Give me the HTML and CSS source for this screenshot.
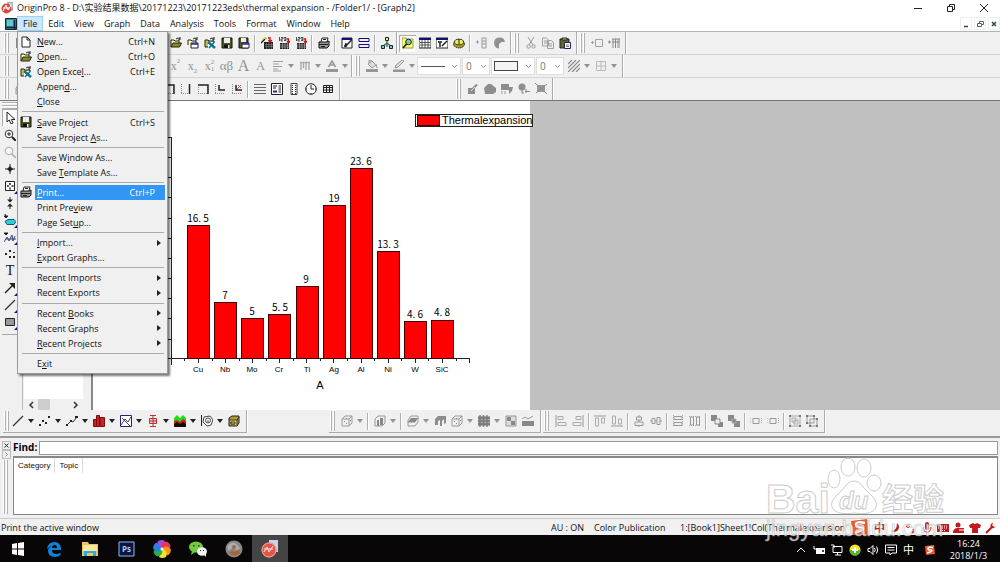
FILE: index.html
```html
<!DOCTYPE html>
<html lang="en">
<head>
<meta charset="utf-8">
<title>OriginPro 8</title>
<link rel="stylesheet" href="styles.css">
</head>
<body>
<svg class="sprite" aria-hidden="true">
  <symbol id="new" viewBox="0 0 12 12"><path d="M2 1h5l3 3v7H2zM7 1v3h3" fill="#fff" stroke="#222"/></symbol>
  <symbol id="open" viewBox="0 0 12 12"><path d="M1 10V3h3l1 1h4v2" fill="#ffffa0" stroke="#222"/><path d="M1 10l2-4h8.500l-2 4z" fill="#8c8a18" stroke="#222"/><path d="M6 2q2-2 4 0M10 0v3H8" fill="none" stroke="#222"/></symbol>
  <symbol id="opent" viewBox="0 0 12 12"><path d="M1 8V3h3l1 1h4v2" fill="#ffffa0" stroke="#222"/><path d="M6 2q2-2 4 0M10 0v3H8" fill="none" stroke="#222"/><path d="M4 6h7v5H4z" fill="#fff" stroke="#222"/><path d="M4 7h7" stroke="#22b" stroke-width="1.500"/></symbol>
  <symbol id="excel" viewBox="0 0 12 12"><path d="M1 10V3h3l1 1h5v6z" fill="#c5c44a" stroke="#222"/><path d="M6 2q2-2 4 0M10 0v3H8" fill="none" stroke="#222"/><path d="M4 5h7v6H4z" fill="#fff"/><path d="M4 5l7 6" stroke="#087a7a" stroke-width="2.500"/><path d="M10.500 5L5 11" stroke="#16a" stroke-width="1.500"/></symbol>
  <symbol id="save" viewBox="0 0 12 12"><path d="M1 1h10v10H1z" fill="#55581b" stroke="#111"/><path d="M3 1h6v5H3z" fill="#eee"/><path d="M3 7.500h6V11H3z" fill="#111"/><path d="M7 8h1.500v3H7z" fill="#eee"/></symbol>
  <symbol id="savet" viewBox="0 0 12 12"><path d="M1 1h9v10H1z" fill="#55581b" stroke="#111"/><path d="M3 1h5v4H3z" fill="#eee"/><path d="M4 6h7v5H4z" fill="#fff" stroke="#222"/><path d="M4 7h7" stroke="#22b" stroke-width="1.500"/></symbol>
  <symbol id="wiz" viewBox="0 0 12 12"><path d="M3 5h9v7H3z" fill="#222"/><path d="M4 7.500h8M4 9.500h8M5.500 6v6M8 6v6M10.500 6v6" stroke="#999" stroke-width=".5"/><path d="M0 6l5-5" stroke="#222" stroke-width="1.500"/><path d="M3 0l2 3M1 2l4-1" stroke="#dd2"/><path d="M7 1h2v3M7.500 3L9 5l2-2" stroke="#c11" fill="none" stroke-width="1.300"/></symbol>
  <symbol id="imp" viewBox="0 0 12 12"><path d="M2 6h9v6H2z" fill="#222"/><path d="M2 8h9M2 10h9M4.500 6v6M7 6v6M9.500 6v6" stroke="#bbb" stroke-width=".6"/><path d="M1.500 0v4M3 .5h2v1.500H3V4h2M6 .5h2v3H6M6 2h2" fill="none" stroke="#222" stroke-width=".8"/><path d="M9 2h1.500v3M9 4l1.500 2L12 4" stroke="#c11" fill="none" stroke-width="1.300"/></symbol>
  <symbol id="print" viewBox="0 0 12 12"><path d="M3 5l1-4h6L9 5" fill="#fff" stroke="#222"/><path d="M1 5h8l2-1v5l-2 2H1z" fill="#999" stroke="#111"/><path d="M1 7.500h9M5 2.500h3M3 9.500h4" stroke="#222"/></symbol>
  <symbol id="note" viewBox="0 0 12 12"><path d="M1 1h10v10H1z" fill="#fff" stroke="#222"/><path d="M1 2h10" stroke="#117" stroke-width="2"/><path d="M10.500 3L4 10l1-4M3 9h3" stroke="#222" fill="none" stroke-width="1.500"/></symbol>
  <symbol id="rows" viewBox="0 0 12 12"><path d="M1 1.500h10v3H1zM1 7.500h10v3H1z" fill="#eef" stroke="#117"/></symbol>
  <symbol id="tree" viewBox="0 0 12 12"><path d="M6 3v3M6 6L2 9M6 6l4 3M6 6v4" stroke="#222"/><path d="M4.500.5h3v3h-3z" fill="#ee7" stroke="#222"/><path d="M.5 8.500h3v3h-3zM8.500 8.500h3v3h-3z" fill="#7cc" stroke="#222"/><path d="M4.500 6.500h3v2h-3z" fill="#2a8" /></symbol>
  <symbol id="find" viewBox="0 0 12 12"><path d="M0 1h4l1 1h6v9H0z" fill="#ffff70" stroke="#995"/><circle cx="6.500" cy="5" r="2.800" fill="#6bd1a8" stroke="#222"/><path d="M4.500 7L1 11" stroke="#222" stroke-width="1.800"/></symbol>
  <symbol id="sheet" viewBox="0 0 12 12"><path d="M0 1h12v10H0z" fill="#fff" stroke="#222"/><path d="M0 2h12" stroke="#117" stroke-width="2"/><path d="M3 3v8M6 3v8M9 3v8M1 5.500h10M1 8h10" stroke="#333" stroke-width=".8"/></symbol>
  <symbol id="script" viewBox="0 0 12 12"><path d="M0 1h12v10H0z" fill="#fff" stroke="#222"/><path d="M0 2h12" stroke="#117" stroke-width="2"/><path d="M2 5h4M4 5v5M6 9l5-5" stroke="#222" stroke-width="1.500"/></symbol>
  <symbol id="gear" viewBox="0 0 12 12"><ellipse cx="6" cy="7" rx="5.500" ry="4" fill="#a59a22" stroke="#222" stroke-dasharray="1.500 .8"/><ellipse cx="6" cy="5" rx="4.500" ry="2.800" fill="#ee6" stroke="#443"/><path d="M6 2v5" stroke="#222"/></symbol>
  <symbol id="addcol" viewBox="0 0 12 12"><path d="M0 5h3M1.500 3.500v3M6 1h4v10H6zM6 4h4M6 7h4" fill="none" stroke="#999"/></symbol>
  <symbol id="arc" viewBox="0 0 12 12"><path d="M12 5A5.500 5.500 0 1 0 6 11.500V7l2.500-2z" fill="#919191"/></symbol>
  <symbol id="cut" viewBox="0 0 12 12"><path d="M3 0l5 8M9 0L4 8" stroke="#999"/><circle cx="3.500" cy="9.500" r="1.700" fill="none" stroke="#999"/><circle cx="8.500" cy="9.500" r="1.700" fill="none" stroke="#999"/></symbol>
  <symbol id="copy" viewBox="0 0 12 12"><path d="M.5 1h4l2 2v6h-6zM5.500 3.500h4l2 2v6h-6zM2 4h3M2 6h3M7 7h3M7 9h3" fill="#eee" stroke="#a0a0a0"/></symbol>
  <symbol id="paste" viewBox="0 0 12 12"><path d="M1 2h9v9H1z" fill="#65642b" stroke="#222"/><path d="M3 1h5v2H3z" fill="#cc8" stroke="#222"/><path d="M5.500 5.500h6v6h-6z" fill="#fff" stroke="#225"/><path d="M7 8h3M7 9.500h3" stroke="#225" stroke-width=".6"/></symbol>
  <symbol id="addbox" viewBox="0 0 12 12"><path d="M0 5.500h3M1.500 4v3M4.500 2.500h7v7h-7z" fill="none" stroke="#a0a0a0"/></symbol>
  <symbol id="addgrid" viewBox="0 0 12 12"><path d="M0 5h3M1.500 3.500v3M4 2h8M4 5h8M5 2v9M7.500 2v9M10 2v9M12 2v9" fill="none" stroke="#8a8a8a"/></symbol>
  <symbol id="left" viewBox="0 0 12 12"><path d="M1 1.500h10M1 4h6M1 6.500h9M1 9h5M1 11h8" stroke="#a0a0a0"/></symbol>
  <symbol id="comb" viewBox="0 0 12 12"><path d="M1 2.500h10M2 2v8M4.500 2v6M7 2v8M10 2v8" stroke="#a8a8a8" stroke-width="1.300"/></symbol>
  <symbol id="fcol" viewBox="0 0 12 12"><path d="M2.500 7L6 1l3.500 6M4 5h4" stroke="#999" stroke-width="1.600" fill="none"/><path d="M0 9h12v3H0z" fill="#959595"/></symbol>
  <symbol id="bucket" viewBox="0 0 12 12"><path d="M2 4l4-3 4 4-4 3zM3 3V0h2v2" fill="#ddd" stroke="#999"/><path d="M10 4l1 4M0 9.500h12V12H0z" fill="#959595" stroke="#999"/></symbol>
  <symbol id="pen" viewBox="0 0 12 12"><path d="M2 8l1-3 6-5 2 1-6 6z" fill="#ddd" stroke="#999"/><path d="M0 9.500h12V12H0z" fill="#959595"/></symbol>
  <symbol id="hatch" viewBox="0 0 12 12"><path d="M0 4l4-4M0 8l8-8M0 12L12 0M4 12l8-8M8 12l4-4" stroke="#888" stroke-width="1.200"/></symbol>
  <symbol id="quad" viewBox="0 0 12 12"><path d="M1.500 1.500h9v9h-9zM6 1v10M1 6h10" fill="none" stroke="#bbb"/></symbol>
  <symbol id="ax1" viewBox="0 0 12 12"><path d="M1.500 1v10M1 10.500h9" stroke="#888" stroke-dasharray="1 1"/><path d="M9.500 1v10" stroke="#222" stroke-width="1.500"/></symbol>
  <symbol id="ax2" viewBox="0 0 12 12"><path d="M1.500 2v9M10.500 2v9M1 10.500h9" stroke="#888" stroke-dasharray="1 1"/><path d="M1 2h10v9" stroke="#222" stroke-width="1.500" fill="none"/></symbol>
  <symbol id="ax3" viewBox="0 0 12 12"><path d="M1.500 1v10M1 10.500h10" stroke="#888" stroke-dasharray="1 1"/><path d="M5 2v5h6" stroke="#222" stroke-width="1.500" fill="none"/></symbol>
  <symbol id="ax4" viewBox="0 0 12 12"><path d="M1.500 1v10M1 10.500h10" stroke="#888" stroke-dasharray="1 1"/><path d="M5 2v5h6" stroke="#222" stroke-width="1.500" fill="none"/><path d="M6 6l4-4M7 2l3 3" stroke="#c55"/></symbol>
  <symbol id="lines" viewBox="0 0 12 12"><path d="M0 1.500h12M0 4.500h12M0 7.500h12M0 10.500h12" stroke="#666"/></symbol>
  <symbol id="form" viewBox="0 0 12 12"><path d="M.5.5h11v11H.5z" fill="#fff" stroke="#222"/><path d="M2 3h4M7.500 3H10M2 5h3M7.500 5H10M7.500 7H10M7.500 9H10" stroke="#222"/><path d="M2 8.500h4" stroke="#22a" stroke-width="2"/></symbol>
  <symbol id="film" viewBox="0 0 12 12"><path d="M3 .5h6v11H3z" fill="#fff" stroke="#444"/><path d="M4.500 2v9M7.500 2v9" stroke="#222" stroke-dasharray="1 1"/></symbol>
  <symbol id="clock" viewBox="0 0 12 12"><circle cx="6" cy="6" r="5.300" fill="#fff" stroke="#222"/><path d="M6 2v4h3M1 6h1M10 6h1M6 10v1" fill="none" stroke="#222"/></symbol>
  <symbol id="table" viewBox="0 0 12 12"><path d="M1.500 2.500h9v7h-9zM1.500 4.500h9M1.500 7h9M4.500 2.500v7M7.500 2.500v7" fill="none" stroke="#222"/></symbol>
  <symbol id="m1" viewBox="0 0 12 12"><path d="M1 5h4l4-4 2 1-3 3v6H1z" fill="#8d8d8d"/><path d="M4 8l4-4" stroke="#ddd"/></symbol>
  <symbol id="m2" viewBox="0 0 12 12"><path d="M0 5l4-4h3l5 4v4L9 11H1z" fill="#8d8d8d"/></symbol>
  <symbol id="m3" viewBox="0 0 12 12"><path d="M0 1h8v3h4l-1 4-3 3V7H0z" fill="#8d8d8d"/><path d="M1 8v3M4 8v3" stroke="#999"/></symbol>
  <symbol id="m4" viewBox="0 0 12 12"><circle cx="4" cy="4" r="3.500" fill="#909090"/><path d="M4 5v5h2M7 8.500h5M8 6v4" stroke="#888" fill="none"/></symbol>
  <symbol id="m5" viewBox="0 0 12 12"><path d="M2 2h8v7H2z" fill="#999"/><path d="M0 0l12 11M12 1L1 10" stroke="#888"/></symbol>
  <symbol id="arrow" viewBox="0 0 12 12"><path d="M3 0v10l2.300-2L7 12l2-1-1.600-3.500H11z" fill="#fff" stroke="#222"/></symbol>
  <symbol id="zin" viewBox="0 0 12 12"><circle cx="5" cy="5" r="3.800" fill="#fff" stroke="#333"/><path d="M3 5h4M5 3v4" stroke="#222"/><path d="M8 8l4 4" stroke="#222" stroke-width="2"/></symbol>
  <symbol id="zout" viewBox="0 0 12 12"><circle cx="5" cy="5" r="3.800" fill="#f6f6f6" stroke="#aaa"/><path d="M8 8l4 4" stroke="#aaa" stroke-width="1.500"/></symbol>
  <symbol id="cross" viewBox="0 0 12 12"><path d="M6 1v10M1 6h10" stroke="#222"/><path d="M6 3l3 3-3 3-3-3z" fill="#222"/></symbol>
  <symbol id="region" viewBox="0 0 12 12"><path d="M1.500 1.500h9v9h-9z" fill="#fff" stroke="#222"/><path d="M6 3v2M6 7.500v2M3 6h2M7.500 6h2" stroke="#222" stroke-width="1.500"/></symbol>
  <symbol id="updown" viewBox="0 0 12 12"><path d="M6 0v4M6 12V8" stroke="#222"/><path d="M3 2.500L6 5.500l3-3zM3 9.500l3-3 3 3z" fill="#222"/></symbol>
  <symbol id="blob" viewBox="0 0 12 12"><path d="M1 0l1 3M0 2h4L2 4z" stroke="#222" fill="#222"/><path d="M1 7.500l3-2 6 0 2 2-2 3-7 0z" fill="#26d0e0" stroke="#255"/></symbol>
  <symbol id="curve" viewBox="0 0 12 12"><path d="M0 2h4L2 4z" fill="#222" stroke="#222"/><path d="M0 11l3-5 2 4 3-6 1 6 2-5M2 8h10" stroke="#447" fill="none"/></symbol>
  <symbol id="dots" viewBox="0 0 12 12"><path d="M1 5h2v2H1zM5 2h2v2H5zM5 8h2v2H5zM9 4h2v1H9zM9 8h2v2H9z" fill="#222"/></symbol>
  <symbol id="ne" viewBox="0 0 12 12"><path d="M1 11l8-8" stroke="#222" stroke-width="1.500"/><path d="M5 1h6v6z" fill="#222"/></symbol>
  <symbol id="line" viewBox="0 0 12 12"><path d="M1 11L11 1" stroke="#333" stroke-width="1.200"/></symbol>
  <symbol id="rect" viewBox="0 0 12 12"><path d="M1.500 2.500h9v7h-9z" fill="#999" stroke="#222"/></symbol>
  <symbol id="scat" viewBox="0 0 12 12"><path d="M0 9h2v2H0zM3 5h2v2H3zM6 7h2v2H6zM9 1h2v2H9z" fill="#222"/></symbol>
  <symbol id="lsym" viewBox="0 0 12 12"><path d="M1 10l4-4 2 1 4-5" stroke="#333" fill="none"/><path d="M0 9h2v2H0zM4 5h2v2H4zM9 1h3v2H9z" fill="#222"/></symbol>
  <symbol id="bars" viewBox="0 0 12 12"><path d="M.5 4.500h3v7h-3zM3.500.5h3v11h-3zM7 2.500h4.500v9H7z" fill="#c22" stroke="#711"/></symbol>
  <symbol id="area" viewBox="0 0 12 12"><path d="M.5.500h11v11H.5z" fill="#fff" stroke="#227"/><path d="M1 10l4-6 3 3 3-5M2 3l8 8" stroke="#446" fill="none"/></symbol>
  <symbol id="box" viewBox="0 0 12 12"><path d="M6 0v12M3 .5h6M3 11.500h6M2.500 3.500h7v5h-7zM2.500 6h7" stroke="#b33" fill="#f3cccc"/></symbol>
  <symbol id="stack" viewBox="0 0 12 12"><path d="M0 3l3-3 3 3 3-3 3 3v5H0z" fill="#1de01d"/><path d="M0 6l3-1 3 2 3-3 3 2v6H0z" fill="#d21c1c"/><path d="M0 9l3-2 3 2 3-2 3 2v3H0z" fill="#1b0a0a"/></symbol>
  <symbol id="contour" viewBox="0 0 12 12"><path d="M.5 0v11" stroke="#222"/><path d="M3 2l6-1 3 4-2 5-4 1-4-4z" fill="#fff" stroke="#444"/><circle cx="7" cy="5.500" r="2.500" fill="none" stroke="#444"/><path d="M7 5v2" stroke="#444"/></symbol>
  <symbol id="books" viewBox="0 0 12 12"><path d="M1 3l3-2h7v7l-2 3H1z" fill="#b79b32" stroke="#222"/><path d="M1 5h8V11M9 5l2-3M3 7h4v2H3z" fill="#eed96e" stroke="#333"/></symbol>
  <symbol id="cube" viewBox="0 0 12 12"><path d="M1 4l3-3h7v7l-3 3H1zM1 4h7v7M8 4l3-3" fill="none" stroke="#999"/><path d="M3 6h1v1H3zM5 8h1v1H5zM5 3h1v1H5zM9 5h1v1H9z" fill="#888"/></symbol>
  <symbol id="cubeb" viewBox="0 0 12 12"><path d="M1 4l3-3h7v7l-3 3H1z" fill="none" stroke="#999"/><path d="M3 5h2v6H3zM6 3h3v7H6z" fill="#888"/></symbol>
  <symbol id="cubes" viewBox="0 0 12 12"><path d="M1 5l3-4h7v6l-3 4H1z" fill="none" stroke="#999"/><path d="M1 7l3-4h7L8 7.500H1z" fill="#888"/></symbol>
  <symbol id="cubew" viewBox="0 0 12 12"><path d="M1 4l3-3h8v7l-2 1V4L8 6v5H6V5L4 6v4H1z" fill="#8c8c8c"/></symbol>
  <symbol id="mesh" viewBox="0 0 12 12"><path d="M0 1h12v10H0z" fill="#aaa"/><path d="M2 0v12M5.500 0v12M9 0v12M0 3h12M0 6h12M0 9h12" stroke="#777" stroke-width="1.300"/></symbol>
  <symbol id="img" viewBox="0 0 12 12"><path d="M1 1h10v10H1z" fill="#ddd" stroke="#999"/><path d="M2 2h4v4H2zM6 6h4v4H6z" fill="#888"/></symbol>
  <symbol id="imgp" viewBox="0 0 12 12"><path d="M0 6h12v5H0z" fill="#888"/><path d="M0 4l3-2 3 2 5-3" fill="none" stroke="#999"/></symbol>
  <symbol id="al" viewBox="0 0 12 12"><path d="M1 0v12" stroke="#999"/><path d="M3 1.500h5v3H3zM3 7.500h8v3H3z" fill="none" stroke="#aaa"/></symbol>
  <symbol id="ar" viewBox="0 0 12 12"><path d="M11 0v12" stroke="#999"/><path d="M4 1.500h5v3H4zM1 7.500h8v3H1z" fill="none" stroke="#aaa"/></symbol>
  <symbol id="at" viewBox="0 0 12 12"><path d="M0 1h12" stroke="#999"/><path d="M1.500 3h3v8h-3zM7.500 3h3v5h-3z" fill="none" stroke="#aaa"/></symbol>
  <symbol id="ab" viewBox="0 0 12 12"><path d="M0 11h12" stroke="#999"/><path d="M1.500 1h3v8h-3zM7.500 4h3v5h-3z" fill="none" stroke="#aaa"/></symbol>
  <symbol id="ac" viewBox="0 0 12 12"><path d="M6 0v12" stroke="#999"/><path d="M3.500 2h5v3h-5zM2 7h8v3.500H2z" fill="#eee" stroke="#999"/></symbol>
  <symbol id="am" viewBox="0 0 12 12"><path d="M0 6h12" stroke="#999"/><path d="M2 3.500h3v5H2zM7 2.500h3v7H7z" fill="#eee" stroke="#999"/></symbol>
  <symbol id="sw" viewBox="0 0 12 12"><path d="M1.500 0v12M10.500 0v12" stroke="#aaa" stroke-dasharray="1 1"/><path d="M2 1.500h8v3H2zM2 7.500h8v3H2z" fill="none" stroke="#999"/></symbol>
  <symbol id="sh" viewBox="0 0 12 12"><path d="M0 1.500h12M0 10.500h12" stroke="#aaa" stroke-dasharray="1 1"/><path d="M1.500 2h3v8h-3zM7.500 2h3v8h-3z" fill="none" stroke="#999"/></symbol>
  <symbol id="front" viewBox="0 0 12 12"><path d="M0 0h6v6H0zM7 7h5v5H7z" fill="#888"/><path d="M4 4h5v5H4z" fill="#eee" stroke="#888"/></symbol>
  <symbol id="back" viewBox="0 0 12 12"><path d="M0 0h6v6H0zM6 6h6v6H6z" fill="#888"/><path d="M4 4h4v4H4z" fill="#888" stroke="#aaa"/></symbol>
  <symbol id="ctr" viewBox="0 0 12 12"><path d="M3 3.500h6v5H3z" fill="none" stroke="#999"/><path d="M0 3v6M11.500 3v6" stroke="#aaa" stroke-dasharray="1 1"/></symbol>
  <symbol id="grp" viewBox="0 0 12 12"><path d="M1 1h10v10H1zM3 3h4v4H3zM5 5h4v4H5z" fill="none" stroke="#aaa"/><path d="M0 0h2v2H0zM10 0h2v2h-2zM0 10h2v2H0zM10 10h2v2h-2z" fill="#777"/></symbol>
  <symbol id="ungrp" viewBox="0 0 12 12"><path d="M1 1h7v7H1zM4 4h7v7H4z" fill="none" stroke="#999"/><path d="M0 0h2v2H0zM7 0h2v2H7zM0 7h2v2H0zM10 3h2v2h-2zM3 10h2v2H3zM10 10h2v2h-2z" fill="#777"/></symbol>
  <symbol id="app" viewBox="0 0 12 12"><path d="M7 0h5v8H7z" fill="#cdd4e4" stroke="#889"/><circle cx="5.500" cy="6.500" r="5" fill="#d84a3c"/><path d="M2 9l3-6 2 5 3-5M2 6h7" stroke="#fff" fill="none"/></symbol>
  <symbol id="graphwin" viewBox="0 0 12 12"><path d="M.5.5h11v11H.5z" fill="#2f8f95" stroke="#123"/><path d="M2 3h6M2 5h6M2 7h6" stroke="#9ff"/><path d="M1 9.500h10M9.500 2v9" stroke="#124" stroke-width="1.500"/></symbol>
</svg>

<header class="titlebar">
  <svg class="ico"><use href="#app"/></svg>
  <h1 class="title">OriginPro 8 - D:\实验结果数据\20171223\20171223eds\thermal expansion - /Folder1/ - [Graph2]</h1>
  <div class="winbtns">
    <button aria-label="Minimize"><svg class="ico"><path d="M2 6.500h8" stroke="#222"/></svg></button>
    <button aria-label="Restore"><svg class="ico"><path d="M2.500 4.500h5v5h-5zM4.500 4V2.500h5v5H8" fill="none" stroke="#222"/></svg></button>
    <button aria-label="Close"><svg class="ico"><path d="M2 2l8 8M10 2l-8 8" stroke="#222"/></svg></button>
  </div>
</header>

<nav class="menubar">
  <svg class="ico"><use href="#graphwin"/></svg>
  <div class="menu-root">
    <button class="menu-name active">File</button>
    <div class="menu" role="menu">
      <button class="item" role="menuitem"><svg class="ico"><use href="#new"/></svg><span><u>N</u>ew...</span><kbd>Ctrl+N</kbd></button>
      <button class="item" role="menuitem"><svg class="ico"><use href="#open"/></svg><span><u>O</u>pen...</span><kbd>Ctrl+O</kbd></button>
      <button class="item" role="menuitem"><svg class="ico"><use href="#excel"/></svg><span>Open Exce<u>l</u>...</span><kbd>Ctrl+E</kbd></button>
      <button class="item" role="menuitem"><span>Appen<u>d</u>...</span></button>
      <button class="item" role="menuitem"><span><u>C</u>lose</span></button>
      <hr>
      <button class="item" role="menuitem"><svg class="ico"><use href="#save"/></svg><span><u>S</u>ave Project</span><kbd>Ctrl+S</kbd></button>
      <button class="item" role="menuitem"><span>Save Project <u>A</u>s...</span></button>
      <hr>
      <button class="item" role="menuitem"><span>Save W<u>i</u>ndow As...</span></button>
      <button class="item" role="menuitem"><span>Save <u>T</u>emplate As...</span></button>
      <hr>
      <button class="item selected" role="menuitem"><svg class="ico"><use href="#print"/></svg><span><u>P</u>rint...</span><kbd>Ctrl+P</kbd></button>
      <button class="item" role="menuitem"><span>Print Pre<u>v</u>iew</span></button>
      <button class="item" role="menuitem"><span>Page Set<u>u</u>p...</span></button>
      <hr>
      <button class="item sub" role="menuitem"><span><u>I</u>mport...</span></button>
      <button class="item" role="menuitem"><span><u>E</u>xport Graphs...</span></button>
      <hr>
      <button class="item sub" role="menuitem"><span>Recent Imports</span></button>
      <button class="item sub" role="menuitem"><span>Recent Exports</span></button>
      <hr>
      <button class="item sub" role="menuitem"><span>Recent <u>B</u>ooks</span></button>
      <button class="item sub" role="menuitem"><span>Recent Graphs</span></button>
      <button class="item sub" role="menuitem"><span><u>R</u>ecent Projects</span></button>
      <hr>
      <button class="item" role="menuitem"><span>E<u>x</u>it</span></button>
    </div>
  </div>
  <button class="menu-name">Edit</button>
  <button class="menu-name">View</button>
  <button class="menu-name">Graph</button>
  <button class="menu-name">Data</button>
  <button class="menu-name">Analysis</button>
  <button class="menu-name">Tools</button>
  <button class="menu-name">Format</button>
  <button class="menu-name">Window</button>
  <button class="menu-name">Help</button>
  <div class="childbtns">
    <button aria-label="Minimize graph"><svg class="ico"><path d="M4 8.500h4" stroke="#345" stroke-width="1.500"/></svg></button>
    <button aria-label="Restore graph"><svg class="ico"><path d="M3.500 5.500h4v3h-4zM5.500 5V3.500h4v3H8" fill="none" stroke="#567"/></svg></button>
    <button aria-label="Close graph"><svg class="ico"><path d="M4 4l4 4M8 4l-4 4" stroke="#345" stroke-width="1.500"/></svg></button>
  </div>
</nav>

<section class="bars">
  <div class="bar-row">
    <div class="tools"><i class="grip"></i>
      <div class="covered"><button class="tb" aria-label="New project"><svg class="ico"><use href="#new"/></svg></button></div>
      <button class="tb" aria-label="Open"><svg class="ico"><use href="#open"/></svg></button>
      <button class="tb" aria-label="Open template"><svg class="ico"><use href="#opent"/></svg></button>
      <button class="tb" aria-label="Open Excel"><svg class="ico"><use href="#excel"/></svg></button>
      <button class="tb" aria-label="Save project"><svg class="ico"><use href="#save"/></svg></button>
      <button class="tb" aria-label="Save template"><svg class="ico"><use href="#savet"/></svg></button>
      <i class="sep"></i>
      <button class="tb" aria-label="Import wizard"><svg class="ico"><use href="#wiz"/></svg></button>
      <button class="tb" aria-label="Import ASCII"><svg class="ico"><use href="#imp"/></svg></button>
      <button class="tb" aria-label="Import multiple ASCII"><svg class="ico"><use href="#imp"/></svg></button>
      <i class="sep"></i>
      <button class="tb" aria-label="Print"><svg class="ico"><use href="#print"/></svg></button>
      <i class="sep"></i>
      <button class="tb" aria-label="Refresh"><svg class="ico"><use href="#note"/></svg></button>
      <button class="tb" aria-label="Duplicate"><svg class="ico"><use href="#rows"/></svg></button>
      <i class="sep"></i>
      <button class="tb" aria-label="Custom routine"><svg class="ico"><use href="#tree"/></svg></button>
    </div>
    <div class="tools">
      <button class="tb pressed" aria-label="Project explorer"><svg class="ico"><use href="#find"/></svg></button>
      <button class="tb" aria-label="Results log"><svg class="ico"><use href="#sheet"/></svg></button>
      <button class="tb" aria-label="Script window"><svg class="ico"><use href="#script"/></svg></button>
      <button class="tb" aria-label="Code builder"><svg class="ico"><use href="#gear"/></svg></button>
      <i class="sep"></i>
      <button class="tb" aria-label="Add column"><svg class="ico"><use href="#addcol"/></svg></button>
      <button class="tb" aria-label="Recalculate"><svg class="ico"><use href="#arc"/></svg></button>
    </div>
    <div class="tools"><i class="grip"></i>
      <button class="tb" aria-label="Cut"><svg class="ico"><use href="#cut"/></svg></button>
      <button class="tb" aria-label="Copy"><svg class="ico"><use href="#copy"/></svg></button>
      <button class="tb" aria-label="Paste"><svg class="ico"><use href="#paste"/></svg></button>
    </div>
    <div class="tools"><i class="grip"></i>
      <button class="tb" aria-label="Add layer"><svg class="ico"><use href="#addbox"/></svg></button>
      <button class="tb" aria-label="Add columns"><svg class="ico"><use href="#addgrid"/></svg></button>
    </div>
  </div>

  <div class="bar-row">
    <div class="tools"><i class="grip"></i>
      <div class="covered"><button class="tb dim">T</button></div>
      <button class="tb dim">x<sup>2</sup></button>
      <button class="tb dim">x<sub>2</sub></button>
      <button class="tb dim">x<span class="both"><span>2</span><span>1</span></span></button>
      <button class="tb dim greek">αβ</button>
      <button class="tb dim large">A</button>
      <button class="tb dim">A</button>
      <button class="tb" aria-label="Align"><svg class="ico"><use href="#left"/></svg></button><button class="drop dim" aria-label="Align options"></button>
      <button class="tb" aria-label="Spacing"><svg class="ico"><use href="#comb"/></svg></button><button class="drop dim" aria-label="Spacing options"></button>
      <button class="tb" aria-label="Font color"><svg class="ico"><use href="#fcol"/></svg></button><button class="drop dim" aria-label="Font color options"></button>
    </div>
    <div class="tools"><i class="grip"></i>
      <button class="tb" aria-label="Fill color"><svg class="ico"><use href="#bucket"/></svg></button><button class="drop dim" aria-label="Fill options"></button>
      <button class="tb" aria-label="Line color"><svg class="ico"><use href="#pen"/></svg></button><button class="drop dim" aria-label="Line color options"></button>
      <select class="pick wide stroke" aria-label="Line style"><option></option></select>
      <select class="pick" aria-label="Line width"><option>0</option></select>
      <select class="pick wide frame" aria-label="Border style"><option></option></select>
      <select class="pick" aria-label="Border width"><option>0</option></select>
      <button class="tb" aria-label="Pattern"><svg class="ico"><use href="#hatch"/></svg></button><button class="drop dim" aria-label="Pattern options"></button>
      <button class="tb" aria-label="Borders"><svg class="ico"><use href="#quad"/></svg></button><button class="drop dim" aria-label="Border options"></button>
    </div>
  </div>

  <div class="bar-row">
    <div class="tools graph-tools"><i class="grip"></i>
      <div class="covered"><button class="tb" aria-label="Extract"><svg class="ico"><use href="#cubes"/></svg></button><button class="tb" aria-label="Top axis"><svg class="ico"><use href="#ax2"/></svg></button></div>
      <button class="tb" aria-label="Right axis"><svg class="ico"><use href="#ax1"/></svg></button>
      <button class="tb" aria-label="Top and right axes"><svg class="ico"><use href="#ax2"/></svg></button>
      <button class="tb" aria-label="Inset"><svg class="ico"><use href="#ax3"/></svg></button>
      <button class="tb" aria-label="Inset with data"><svg class="ico"><use href="#ax4"/></svg></button>
      <i class="sep"></i>
      <button class="tb" aria-label="Layers"><svg class="ico"><use href="#lines"/></svg></button>
      <button class="tb" aria-label="Legend"><svg class="ico"><use href="#form"/></svg></button>
      <button class="tb" aria-label="Color scale"><svg class="ico"><use href="#film"/></svg></button>
      <button class="tb" aria-label="Date and time"><svg class="ico"><use href="#clock"/></svg></button>
      <button class="tb" aria-label="Table"><svg class="ico"><use href="#table"/></svg></button>
    </div>
    <div class="tools mask-tools"><i class="grip"></i>
      <button class="tb" aria-label="Mask point"><svg class="ico"><use href="#m1"/></svg></button>
      <button class="tb" aria-label="Mask range"><svg class="ico"><use href="#m2"/></svg></button>
      <button class="tb" aria-label="Swap mask"><svg class="ico"><use href="#m3"/></svg></button>
      <button class="tb" aria-label="Mask color"><svg class="ico"><use href="#m4"/></svg></button>
      <button class="tb" aria-label="Disable mask"><svg class="ico"><use href="#m5"/></svg></button>
    </div>
  </div>
</section>

<main class="work">
  <aside class="toolbox">
    <i class="hgrip"></i>
    <button class="pressed" aria-label="Pointer"><svg class="ico"><use href="#arrow"/></svg></button>
    <button aria-label="Zoom in"><svg class="ico"><use href="#zin"/></svg></button>
    <button aria-label="Zoom out"><svg class="ico"><use href="#zout"/></svg></button>
    <button aria-label="Screen reader"><svg class="ico"><use href="#cross"/></svg></button>
    <button class="more" aria-label="Data reader"><svg class="ico"><use href="#region"/></svg></button>
    <button aria-label="Data selector"><svg class="ico"><use href="#updown"/></svg></button>
    <button class="more" aria-label="Selection"><svg class="ico"><use href="#blob"/></svg></button>
    <button class="more" aria-label="Mask"><svg class="ico"><use href="#curve"/></svg></button>
    <button aria-label="Draw data"><svg class="ico"><use href="#dots"/></svg></button>
    <button class="letter">T</button>
    <button class="more" aria-label="Arrow"><svg class="ico"><use href="#ne"/></svg></button>
    <button class="more" aria-label="Line"><svg class="ico"><use href="#line"/></svg></button>
    <button class="more" aria-label="Rectangle"><svg class="ico"><use href="#rect"/></svg></button>
  </aside>
  <aside class="explorer">
    <div class="pane"></div>
    <div class="hscroll"><button aria-label="Scroll left"><svg class="ico"><path d="M7 3L4 6l3 3" fill="none" stroke="#333" stroke-width="1.500"/></svg></button><i class="thumb"></i><button aria-label="Scroll right"><svg class="ico"><path d="M5 3l3 3-3 3" fill="none" stroke="#333" stroke-width="1.500"/></svg></button></div>
  </aside>
  <figure class="page">
    <svg class="chart" width="437" height="309" viewBox="93 101 437 309" role="img" aria-label="Thermal expansion by element">
      <g class="axis">
        <path d="M171.500 137v228M168 358.500h301M469.500 358v5"/>
        <path d="M168 137.500h4M168 157.500h4M168 177.500h4M168 197.500h4M168 218.500h4M168 238.500h4M168 258.500h4M168 278.500h4M168 298.500h4M168 318.500h4M168 339.500h4"/>
        <path d="M198.500 359v4M225.500 359v4M252.500 359v4M279.500 359v4M306.500 359v4M333.500 359v4M361.500 359v4M388.500 359v4M415.500 359v4M442.500 359v4"/>
        <path d="M184.500 359v2M212.500 359v2M239.500 359v2M266.500 359v2M293.500 359v2M320.500 359v2M347.500 359v2M374.500 359v2M401.500 359v2M428.500 359v2M456.500 359v2"/>
      </g>
      <g class="bar">
        <rect x="187.500" y="225.500" width="22" height="133"/>
        <rect x="214.500" y="302.500" width="22" height="56"/>
        <rect x="241.500" y="318.500" width="22" height="40"/>
        <rect x="268.500" y="314.500" width="22" height="44"/>
        <rect x="296.500" y="286.500" width="22" height="72"/>
        <rect x="323.500" y="205.500" width="22" height="153"/>
        <rect x="350.500" y="168.500" width="22" height="190"/>
        <rect x="377.500" y="251.500" width="22" height="107"/>
        <rect x="404.500" y="321.500" width="22" height="37"/>
        <rect x="431.500" y="320.500" width="22" height="38"/>
      </g>
      <g class="value">
        <text x="198" y="222">16. 5</text><text x="225" y="299">7</text><text x="252" y="315">5</text><text x="280" y="311">5. 5</text><text x="306" y="283">9</text><text x="334" y="202">19</text><text x="361" y="165">23. 6</text><text x="388" y="248">13. 3</text><text x="415" y="318">4. 6</text><text x="442" y="316">4. 8</text>
      </g>
      <g class="name">
        <text x="198" y="372">Cu</text><text x="225" y="372">Nb</text><text x="252" y="372">Mo</text><text x="279" y="372">Cr</text><text x="307" y="372">Ti</text><text x="334" y="372">Ag</text><text x="361" y="372">Al</text><text x="388" y="372">Ni</text><text x="415" y="372">W</text><text x="442" y="372">SiC</text>
      </g>
      <text class="xtitle" x="320" y="389">A</text>
      <rect x="415.500" y="114.500" width="117" height="12" fill="#fff" stroke="#222"/>
      <rect x="417.500" y="115.500" width="22" height="10" fill="#f00" stroke="#400"/>
      <text class="legend" x="442" y="124">Thermalexpansion</text>
    </svg>
  </figure>
</main>

<section class="bar-row lower">
  <div class="tools"><i class="grip"></i>
    <button class="tb" aria-label="Line plot"><svg class="ico"><use href="#line"/></svg></button><button class="drop" aria-label="Line plots"></button>
    <button class="tb" aria-label="Scatter plot"><svg class="ico"><use href="#scat"/></svg></button><button class="drop" aria-label="Scatter plots"></button>
    <button class="tb" aria-label="Line and symbol"><svg class="ico"><use href="#lsym"/></svg></button><button class="drop" aria-label="Line and symbol plots"></button>
    <button class="tb" aria-label="Column plot"><svg class="ico"><use href="#bars"/></svg></button><button class="drop" aria-label="Column plots"></button>
    <button class="tb" aria-label="Multi-curve plot"><svg class="ico"><use href="#area"/></svg></button><button class="drop" aria-label="Multi-curve plots"></button>
    <button class="tb" aria-label="Box plot"><svg class="ico"><use href="#box"/></svg></button><button class="drop" aria-label="Box plots"></button>
    <button class="tb" aria-label="Area plot"><svg class="ico"><use href="#stack"/></svg></button><button class="drop" aria-label="Area plots"></button>
    <button class="tb" aria-label="Contour plot"><svg class="ico"><use href="#contour"/></svg></button><button class="drop" aria-label="Contour plots"></button>
    <button class="tb" aria-label="Template library"><svg class="ico"><use href="#books"/></svg></button>
  </div>
  <div class="tools plot3d"><i class="grip"></i>
    <button class="tb" aria-label="3D scatter"><svg class="ico"><use href="#cube"/></svg></button><button class="drop dim" aria-label="3D scatter plots"></button>
    <i class="sep"></i>
    <button class="tb" aria-label="3D bars"><svg class="ico"><use href="#cubeb"/></svg></button><button class="drop dim" aria-label="3D bar plots"></button>
    <i class="sep"></i>
    <button class="tb" aria-label="3D surface"><svg class="ico"><use href="#cubes"/></svg></button><button class="drop dim" aria-label="3D surface plots"></button>
    <button class="tb" aria-label="3D walls"><svg class="ico"><use href="#cubew"/></svg></button>
    <button class="tb" aria-label="3D wire"><svg class="ico"><use href="#cube"/></svg></button><button class="drop dim" aria-label="3D wire plots"></button>
    <button class="tb" aria-label="Matrix contour"><svg class="ico"><use href="#mesh"/></svg></button><button class="drop dim" aria-label="Matrix contours"></button>
    <button class="tb" aria-label="Image plot"><svg class="ico"><use href="#img"/></svg></button>
    <button class="tb" aria-label="Image profile"><svg class="ico"><use href="#imgp"/></svg></button>
  </div>
  <div class="tools edit-tools"><i class="grip"></i>
    <button class="tb" aria-label="Align left"><svg class="ico"><use href="#al"/></svg></button>
    <button class="tb" aria-label="Align right"><svg class="ico"><use href="#ar"/></svg></button>
    <i class="sep"></i>
    <button class="tb" aria-label="Align top"><svg class="ico"><use href="#at"/></svg></button>
    <button class="tb" aria-label="Align bottom"><svg class="ico"><use href="#ab"/></svg></button>
    <i class="sep"></i>
    <button class="tb" aria-label="Center vertically"><svg class="ico"><use href="#ac"/></svg></button>
    <button class="tb" aria-label="Center horizontally"><svg class="ico"><use href="#am"/></svg></button>
    <i class="sep"></i>
    <button class="tb" aria-label="Same width"><svg class="ico"><use href="#sw"/></svg></button>
    <button class="tb" aria-label="Same height"><svg class="ico"><use href="#sh"/></svg></button>
    <i class="sep"></i>
    <button class="tb" aria-label="Front"><svg class="ico"><use href="#front"/></svg></button>
    <button class="tb" aria-label="Back"><svg class="ico"><use href="#back"/></svg></button>
    <i class="sep"></i>
    <button class="tb" aria-label="Front data"><svg class="ico"><use href="#ctr"/></svg></button>
    <button class="tb" aria-label="Back data"><svg class="ico"><use href="#ctr"/></svg></button>
    <i class="sep"></i>
    <button class="tb" aria-label="Group"><svg class="ico"><use href="#grp"/></svg></button>
    <button class="tb" aria-label="Ungroup"><svg class="ico"><use href="#ungrp"/></svg></button>
  </div>
</section>

<section class="finder">
  <div class="dock"><button aria-label="Close panel"><svg viewBox="0 0 7 7" width="7" height="7"><path d="M1.500 1.500l4 4M5.500 1.500l-4 4" stroke="#222"/></svg></button><button aria-label="Expand panel"><svg viewBox="0 0 7 7" width="7" height="7"><path d="M2.500 1.500l2 2-2 2" stroke="#999" fill="none"/></svg></button><i class="grip"></i></div>
  <div class="finder-body">
    <div class="find-row"><label for="find-text">Find:</label><input id="find-text" type="text"></div>
    <div class="results"><table><thead><tr><th>Category</th><th>Topic</th></tr></thead></table></div>
  </div>
</section>

<footer class="status">
  <span class="hint">Print the active window</span>
  <span class="au">AU : ON</span>
  <span class="theme">Color Publication</span>
  <span class="data">1:[Book1]Sheet1!Col(Thermalexpansion</span>
  <div class="ime">
    <svg class="slogo" viewBox="0 0 20 20" width="20" height="20"><path d="M1 3l16-2 2 16-16 2z" fill="#ea5a2c"/><path d="M15 5q-9-2-9 1.500t6 3q4 2-7 5" fill="none" stroke="#fff" stroke-width="2.500"/></svg>
    <span>中</span>
    <svg class="ico"><path d="M8 1a5 5 0 1 1-6 8q6 0 6-8z" fill="#c11a1a"/></svg>
    <svg class="ico"><circle cx="3" cy="4" r="1.500" fill="none" stroke="#c11a1a"/><path d="M8 7q2 2-1 4" stroke="#c11a1a" stroke-width="2" fill="none"/></svg>
    <svg class="ico"><rect x="4" width="4" height="8" rx="2" fill="#c11a1a"/><path d="M2 5q0 5 4 5t4-5M6 10v2" fill="none" stroke="#c11a1a"/></svg>
    <svg class="ico"><path d="M0 2h12v8H0z" fill="#c11a1a"/><path d="M1 4h10M1 6h10M3 8.500h6" stroke="#fff" stroke-dasharray="1 1"/></svg>
    <svg class="ico"><circle cx="5" cy="3" r="2.500" fill="#c11a1a"/><path d="M0 11q0-5 5-5h6v5z" fill="#c11a1a"/><path d="M6 8h5" stroke="#fff"/></svg>
    <svg class="ico"><path d="M0 3l4-2q2 2 4 0l4 2-1 3H9v5H3V6H1z" fill="#c11a1a"/></svg>
    <svg class="ico"><path d="M1 11l6-6" stroke="#c11a1a" stroke-width="2"/><path d="M11 3.500L9 5 7 3l1.500-2Q5 1 5.500 5q3 3 5.500-1.500z" fill="#c11a1a"/></svg>
  </div>
</footer>

<nav class="taskbar">
  <button aria-label="Start"><svg viewBox="0 0 20 20" width="20" height="20"><path d="M4 5l5-1v5.500H4zM10 4l6-1v6.500h-6zM4 10.500h5V16l-5-1zM10 10.500h6V17l-6-1z" fill="#fff"/></svg></button>
  <button aria-label="Edge"><svg viewBox="0 0 20 20" width="20" height="20"><path d="M3 10Q4 3 10.500 3 17 3 17 11H8q0 4 4 4 2.500 0 4.500-1.500V16Q14 18 11 18q-7-.5-7-6 0-3.500 4-5-2.500.5-5 3zM8 9h5q0-3-2.500-3T8 9z" fill="#1081d8"/></svg></button>
  <button class="run" aria-label="File Explorer"><svg viewBox="0 0 20 20" width="20" height="20"><path d="M2 3h6l1 2h9v12H2z" fill="#e8c65c"/><path d="M3 6h14v6H3z" fill="#f8e7a0"/><path d="M4 17v-5h12v5h-3v-3H7v3z" fill="#29abe2"/></svg></button>
  <button aria-label="Photoshop"><svg viewBox="0 0 20 20" width="20" height="20"><path d="M3 3h15v14H3z" fill="#0b1540" stroke="#8fb6f0"/><text x="10.500" y="13" text-anchor="middle" class="ps">Ps</text></svg></button>
  <button class="run" aria-label="Browser"><svg viewBox="0 0 20 20" width="20" height="20"><g transform="translate(10 10)"><path d="M0 0Q-7-2-4-8q4-2 7 0z" fill="#a34be0"/><path d="M0 0Q-7-2-4-8q4-2 7 0z" transform="rotate(60)" fill="#e8365a"/><path d="M0 0Q-7-2-4-8q4-2 7 0z" transform="rotate(120)" fill="#f7941d"/><path d="M0 0Q-7-2-4-8q4-2 7 0z" transform="rotate(180)" fill="#f4e22c"/><path d="M0 0Q-7-2-4-8q4-2 7 0z" transform="rotate(240)" fill="#27b24a"/><path d="M0 0Q-7-2-4-8q4-2 7 0z" transform="rotate(300)" fill="#2b7fe8"/><circle r="1.500" fill="#fff"/></g></svg></button>
  <button class="run" aria-label="WeChat"><svg viewBox="0 0 20 20" width="20" height="20"><ellipse cx="8" cy="8" rx="7" ry="5.500" fill="#72c93c"/><path d="M4 12l-1 4 4-3z" fill="#72c93c"/><ellipse cx="14" cy="12.500" rx="5" ry="4.300" fill="#f2f2f2"/><path d="M16 16l2 2v-4z" fill="#f2f2f2"/><path d="M5 6h1.500v1.500H5zM10 6h1.500v1.500H10zM12 11h1v1h-1zM15 11h1v1h-1z" fill="#333"/></svg></button>
  <button class="run" aria-label="Photo viewer"><svg viewBox="0 0 20 20" width="20" height="20"><circle cx="10" cy="10" r="8.500" fill="#8c8780"/><path d="M3 8q3-5 8-4l5 5-3 2-5-2-3 3z" fill="#a8aeb8"/><path d="M5 14q3-4 5-1l5-2 1 3q-5 5-11 0z" fill="#a0653c"/><circle cx="10" cy="8" r="2" fill="#9b6a48"/></svg></button>
  <button class="run current" aria-label="OriginPro"><svg viewBox="0 0 20 20" width="20" height="20"><path d="M9 1h9v12H9z" fill="#c9d3e6"/><circle cx="9" cy="11" r="7.500" fill="#e0574a"/><path d="M4 13l3-5 2 5 4-6M4 10h9" stroke="#ffe0d8" fill="none"/><circle cx="9" cy="11" r="7" fill="none" stroke="#f3aaa0"/></svg></button>
  <div class="tray">
    <svg class="ico"><path d="M2 8l4-4 4 4" fill="none" stroke="#fff"/></svg>
    <svg class="ico"><path d="M3 4h9v6H3z" fill="#fff"/><path d="M1 2v3h2" stroke="#fff" fill="none"/><path d="M9 6h2v2H9z" fill="#444"/></svg>
    <svg class="ico"><path d="M2 2.500h9v6H2zM4 11h6M6.500 9v2M0 1h3v3" fill="none" stroke="#fff"/></svg>
    <svg class="ico"><circle cx="6" cy="6" r="5.500" fill="#f2e61e"/><path d="M.5 6a5.500 5.500 0 0 0 11 0z" fill="#5cb531"/><path d="M6 3v6M3 6h6" stroke="#fff" stroke-width="2"/></svg>
    <svg class="ico"><path d="M1 4.500h2l3-3v9l-3-3H1zM7.500 4q1.500 2 0 4M9.500 2.500q2.500 3.500 0 7" fill="none" stroke="#fff"/></svg>
    <svg class="ico"><path d="M.5 1h11v8H7l-2 2V9H.5zM2.500 3.500h7M2.500 6h7" fill="none" stroke="#fff"/></svg>
    <span class="lang">中</span>
    <svg class="ico red"><path d="M1 2l9-1 1 9-9 1z" fill="#ea5a2c"/><path d="M9 3.500q-5-1-5 1t3 1.500q3 1-4 3" fill="none" stroke="#fff" stroke-width="1.500"/></svg>
    <time class="clock">16:24<br>2018/1/3</time>
  </div>
</nav>

<svg class="watermark" width="190" height="90" viewBox="760 452 190 90" aria-hidden="true">
  <g class="mark">
    <text x="766" y="511" class="wm-latin">Bai</text>
    <ellipse cx="834" cy="477" rx="6" ry="9"/><ellipse cx="848" cy="465" rx="7" ry="9"/><ellipse cx="864" cy="466" rx="7" ry="9"/><ellipse cx="874" cy="481" rx="7" ry="8"/>
    <path d="M854 479q6 0 10 7l9 9q7 8 0 14-6 4-19 2-13 2-19-2-7-6 0-14l9-9q4-7 10-7z"/>
    <text x="839" y="507" class="wm-du">du</text>
    <text x="882" y="508" class="wm-cjk">经验</text>
  </g>
  <text x="766" y="534" class="wm-url">jingyan.baidu.com</text>
</svg>
</body>
</html>
```
FILE: styles.css
```css
* { box-sizing: border-box; }
body {
  margin: 0;
  min-height: 100vh;
  display: flex;
  flex-direction: column;
  position: relative;
  overflow-x: hidden;
  background: #f0f0f0;
  color: #111;
  font: 9px/14px "Open Sans", "Noto Sans CJK SC", sans-serif;
}
button, input, select { font: inherit; color: inherit; margin: 0; padding: 0; border: 0; background: none; }
button { display: flex; align-items: center; justify-content: center; }
.sprite { position: absolute; width: 0; height: 0; }
.ico { width: 12px; height: 12px; flex: none; display: block; }

.titlebar { display: flex; align-items: center; height: 16px; padding-left: 1px; background: #fff; }
.title { margin: 0 0 0 4px; font-size: 9px; font-weight: 400; line-height: 16px; white-space: nowrap; }
.title:lang(en) { font-family: "Open Sans", "Noto Sans CJK SC", sans-serif; }
.winbtns { display: flex; margin-left: auto; }
.winbtns button { width: 33px; height: 16px; }

.menubar { display: flex; height: 16px; padding-left: 5px; align-items: center; background: #fff; border-bottom: 1px solid #b4b4b4; }
.menu-root { position: relative; }
.menu-name { height: 15px; padding: 0 5px; }
.menu-root .menu-name { padding: 0 6px; }
.menu-name.active { background: #cce8ff; outline: 1px solid #99d1ff; outline-offset: -1px; }
.childbtns { display: flex; gap: 2px; margin-left: auto; }
.childbtns button { width: 12px; height: 13px; border: 1px solid #eee; }

.menu {
  position: absolute; top: 15px; left: 0; z-index: 5;
  width: 151px; min-height: 343px; padding: 2px;
  display: flex; flex-direction: column;
  background: #f0f0f0; border: 1px solid #999; box-shadow: 2px 2px 2px #0008;
}
.item { flex: 1; width: 100%; line-height: 15px; display: grid; grid-template-columns: 16px 1fr auto; text-align: left; padding-right: 1px; }
.item span { grid-column: 2; padding-left: 1px; }
.item svg { grid-row: 1; grid-column: 1; }
.item kbd { font: inherit; padding-right: 9px; }
.item.sub::after { content: ""; border: 3px solid transparent; border-left: 4px solid #222; border-right: 0; margin-right: 3px; }
.item.selected { color: #fff; background: linear-gradient(90deg, transparent 15px, #3296f5 15px); }
.menu hr { width: calc(100% - 3px); height: 1px; margin: 2px 0 2px 2px; border: 0; background: #aaa; }
u { text-decoration-thickness: 1px; text-underline-offset: 1px; }

.bar-row { display: flex; gap: 2px; padding-left: 3px; }
.bars .bar-row { height: 23px; border-bottom: 1px solid #d4d4d4; }
.bars .bar-row:last-child { height: 22px; border-bottom: 0; }
.bars { border-bottom: 1px solid #777; }
.tools { display: flex; align-items: center; padding-right: 3px; border-right: 1px solid #aaa; box-shadow: 1px 0 #fff; }
.bars .tools:first-child { padding-right: 1px; }
.grip { width: 9px; flex: none; align-self: stretch; margin: 1px 0; background: linear-gradient(90deg, transparent 1px, #fff 1px 2px, #b0b0b0 2px 3px, transparent 3px 4px, #fff 4px 5px, #b0b0b0 5px 6px, transparent 6px); }
.sep { width: 6px; height: 17px; flex: none; background: linear-gradient(90deg, transparent 2px, #b0b0b0 2px 3px, #fff 3px 4px, transparent 4px); }
.edit-tools .sep { width: 5px; }
.tb { width: 17px; height: 17px; flex: none; }
.tb.dim { color: #929292; font: 12px "Liberation Serif", serif; }
.tb.large { font-size: 16px; }
.tb.greek { font-size: 13px; }
.tb sup, .tb sub, .both { font-size: 7px; line-height: 7px; }
.tb sup { align-self: flex-start; }
.tb sub { align-self: flex-end; }
.both { display: grid; }
.pressed { background: #fafafa; box-shadow: inset 1px 1px #aaa; }
.covered { width: 155px; display: flex; justify-content: space-between; }
.graph-tools .covered { width: 165px; }
.graph-tools { width: 337px; }
.mask-tools { margin-left: 113px; }
.drop { width: 10px; height: 17px; flex: none; }
.drop::before { content: ""; border: 3px solid transparent; border-top: 4px solid #222; border-bottom: 0; }
.drop.dim::before { border-top-color: #929292; }
.pick {
  appearance: none; width: 28px; height: 18px; margin-right: 1px; padding-left: 3px; border: 1px solid #ddd; font-size: 10px; line-height: 16px; color: #777;
  background: #fff url("data:image/svg+xml,%3Csvg xmlns='http://www.w3.org/2000/svg' width='7' height='5'%3E%3Cpath d='M1 1l2.500 2.500L6 1' fill='none' stroke='%23999'/%3E%3C/svg%3E") no-repeat right 2px center;
}
.pick.wide { width: 44px; }
.pick.stroke { background-image: linear-gradient(#555, #555), url("data:image/svg+xml,%3Csvg xmlns='http://www.w3.org/2000/svg' width='7' height='5'%3E%3Cpath d='M1 1l2.500 2.500L6 1' fill='none' stroke='%23999'/%3E%3C/svg%3E"); background-size: 24px 1px, 7px 5px; background-position: 3px center, right 2px center; }
.pick.frame { background-image: linear-gradient(#f4f4f4, #f4f4f4), linear-gradient(#444, #444), url("data:image/svg+xml,%3Csvg xmlns='http://www.w3.org/2000/svg' width='7' height='5'%3E%3Cpath d='M1 1l2.500 2.500L6 1' fill='none' stroke='%23999'/%3E%3C/svg%3E"); background-size: 22px 8px, 24px 10px, 7px 5px; background-position: 3px center, 2px center, right 2px center; }

.work { flex: 1; display: flex; background: #c0c0c0; }
.toolbox { width: 22px; padding-left: 2px; background: #f0f0f0; }
.toolbox::after { content: ""; display: block; height: 4px; border-bottom: 1px solid #aaa; }
.hgrip { display: block; width: 16px; height: 8px; background: repeating-linear-gradient(#f0f0f0 0 1px, #b0b0b0 1px 2px, #fff 2px 3px); }
.toolbox button { width: 16px; height: 17px; position: relative; }
.toolbox .letter { font: 14px "Liberation Serif", serif; }
.toolbox .more::after { content: ""; position: absolute; right: 0; bottom: 0; border: 2px solid transparent; border-right-color: #117; border-bottom-color: #117; }
.explorer { width: 71px; padding: 0 8px 0 1px; display: flex; flex-direction: column; background: #f0f0f0; border-left: 1px solid #bbb; border-right: 2px solid #888; }
.pane { flex: 1; background: #fff; }
.hscroll { display: flex; align-items: center; height: 11px; padding: 0 2px; }
.thumb { width: 12px; height: 11px; margin-right: auto; background: #cdcdcd; }
.page { margin: 0; background: #fff; }
.chart { display: block; overflow: visible; }
.axis path { fill: none; stroke: #222; }
.bar rect { fill: #f00; stroke: #400; }
.value { font: 10px "Noto Sans CJK SC", sans-serif; text-anchor: middle; }
.name { font: 8px "Liberation Sans", sans-serif; text-anchor: middle; }
.xtitle { font: 11px "Liberation Sans", sans-serif; text-anchor: middle; }
.legend { font: 11px "Liberation Sans", sans-serif; }

.lower { height: 28px; padding-bottom: 3px; border-bottom: 2px solid #999; }
.lower .tools { border-bottom: 1px solid #aaa; padding-right: 4px; }
.lower .tools:first-child .grip { width: 6px; }
.plot3d { margin-left: 80px; }

.finder { display: flex; padding: 3px 2px 3px 0; }
.dock { width: 13px; display: flex; flex-direction: column; align-items: center; }
.dock button { width: 9px; height: 9px; border: 1px solid #bbb; }
.dock .grip { align-self: auto; flex: 1; }
.finder-body { flex: 1; display: flex; flex-direction: column; gap: 1px; }
.find-row { display: flex; height: 14px; line-height: 12px; gap: 2px; }
.find-row label { font-weight: 700; font-size: 10px; color: #000; }
.find-row input { flex: 1; min-width: 0; background: #fff; border: 1px solid #999; }
.results { height: 59px; background: #fff; border: 1px solid #888; border-width: 2px 1px 1px; }
.results table { border-collapse: collapse; font: 8px/15px "Liberation Sans", sans-serif; }
.results th { font-weight: 400; padding: 0 4px; border-right: 1px solid #ddd; }

.status { display: grid; grid-template-columns: 551px 43px 86px minmax(0, 1fr) 143px; height: 17px; line-height: 17px; border-top: 1px solid #ccc; white-space: nowrap; }
.hint { padding-left: 1px; }
.ime { display: flex; align-items: center; justify-content: space-between; padding-right: 3px; background: #fff; color: #c11a1a; font-size: 11px; font-weight: 700; }
.slogo { margin: -6px 0 -6px -7px; }

.taskbar { display: flex; height: 29px; background: #080606; color: #fff; }
.taskbar > button { width: 36px; border-bottom: 2px solid transparent; }
.run { background: linear-gradient(#8ab9e6, #8ab9e6) center bottom / 29px 2px no-repeat border-box; }
.run.current { background-color: #444; background-size: 100% 2px; }
.ps { font: 700 8px "Open Sans", sans-serif; fill: #a8cdff; }
.tray { display: flex; align-items: center; gap: 6px; margin-left: auto; padding-right: 10px; }
.lang { width: 11px; font-size: 11px; }
.red { margin-left: 4px; }
.clock { width: 43px; margin-left: 5px; text-align: center; line-height: 12px; }

.watermark { position: absolute; right: 50px; bottom: 20px; pointer-events: none; z-index: 4; }
.mark > * { fill: #fff; stroke: #ccc; stroke-width: 1px; }
.mark .wm-latin { font: 700 41px "Liberation Sans", sans-serif; }
.mark .wm-du { font: italic 700 24px "Liberation Sans", sans-serif; }
.mark .wm-cjk { font: 700 31px "Noto Sans CJK SC", sans-serif; }
.wm-url { font: 22px "Liberation Sans", sans-serif; fill: #fff; fill-opacity: .75; stroke: #999; stroke-opacity: .4; stroke-width: 1px; }
```
